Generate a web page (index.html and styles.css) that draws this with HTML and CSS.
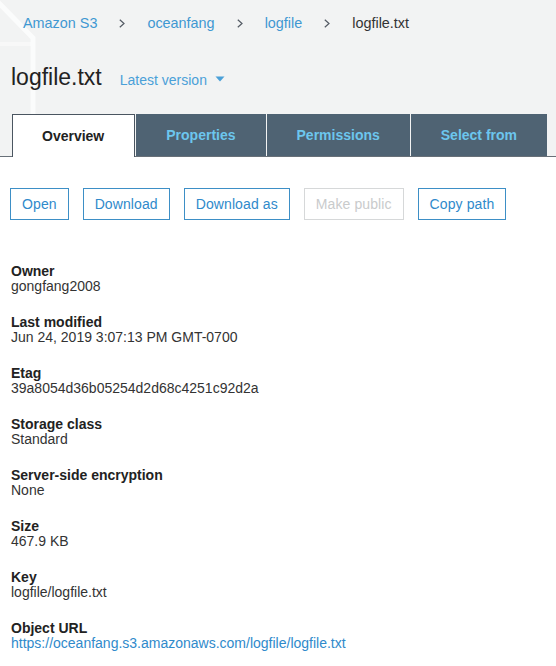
FILE: index.html
```
<!DOCTYPE html>
<html lang="en">
<head>
<meta charset="utf-8">
<title>logfile.txt</title>
<link rel="stylesheet" href="styles.css">
</head>
<body>
<header class="top">
  <svg class="deco" width="60" height="157" viewBox="0 0 60 157" aria-hidden="true">
    <path d="M-4 0 L33 38 L33 160" fill="none" stroke="#ffffff" stroke-width="5" stroke-opacity="0.7"/>
    <path d="M-4 44 L31 44" fill="none" stroke="#ffffff" stroke-width="4" stroke-opacity="0.45"/>
  </svg>
  <nav class="crumbs">
    <a class="crumb-link" href="#">Amazon S3</a>
    <svg class="chev" width="6" height="9" viewBox="0 0 6 9"><path d="M0.8 0.8 L5 4.5 L0.8 8.2" fill="none" stroke="#545b64" stroke-width="1.2"/></svg>
    <a class="crumb-link" href="#">oceanfang</a>
    <svg class="chev" width="6" height="9" viewBox="0 0 6 9"><path d="M0.8 0.8 L5 4.5 L0.8 8.2" fill="none" stroke="#545b64" stroke-width="1.2"/></svg>
    <a class="crumb-link" href="#">logfile</a>
    <svg class="chev" width="6" height="9" viewBox="0 0 6 9"><path d="M0.8 0.8 L5 4.5 L0.8 8.2" fill="none" stroke="#545b64" stroke-width="1.2"/></svg>
    <span class="crumb-current">logfile.txt</span>
  </nav>
  <div class="title-row">
    <h1 class="title">logfile.txt</h1>
    <span class="version">Latest version
      <svg class="caret" width="10" height="6" viewBox="0 0 10 6"><path d="M0.5 0.5 L9.5 0.5 L5 5.5 Z" fill="#4aa0d8"/></svg>
    </span>
  </div>
  <div class="tabs">
    <div class="tab tab-active">Overview</div>
    <div class="tab">Properties</div>
    <div class="tab">Permissions</div>
    <div class="tab">Select from</div>
  </div>
</header>
<main class="content">
  <div class="actions">
    <button class="btn">Open</button>
    <button class="btn">Download</button>
    <button class="btn">Download as</button>
    <button class="btn btn-disabled">Make public</button>
    <button class="btn">Copy path</button>
  </div>
  <dl class="props">
    <dt>Owner</dt><dd>gongfang2008</dd>
    <dt>Last modified</dt><dd>Jun 24, 2019 3:07:13 PM GMT-0700</dd>
    <dt>Etag</dt><dd>39a8054d36b05254d2d68c4251c92d2a</dd>
    <dt>Storage class</dt><dd>Standard</dd>
    <dt>Server-side encryption</dt><dd>None</dd>
    <dt>Size</dt><dd>467.9 KB</dd>
    <dt>Key</dt><dd>logfile/logfile.txt</dd>
    <dt>Object URL</dt><dd><a class="url" href="#">https://oceanfang.s3.amazonaws.com/logfile/logfile.txt</a></dd>
  </dl>
</main>
</body>
</html>
```
FILE: styles.css
```
* { box-sizing: border-box; }

html, body {
  margin: 0;
  padding: 0;
  background: #ffffff;
}

body {
  font-family: "Liberation Sans", Arial, Helvetica, sans-serif;
  font-size: 14px;
  color: #333333;
}

.top {
  position: relative;
  background: #f2f3f3;
  overflow: hidden;
}

.deco {
  position: absolute;
  left: 0;
  top: 0;
  pointer-events: none;
}

.crumbs {
  position: relative;
  display: flex;
  align-items: center;
  gap: 22px;
  padding: 13px 0 0 23px;
  font-size: 14.4px;
  line-height: 20px;
}

.crumb-link {
  color: #3f98d2;
  text-decoration: none;
}

.crumb-current {
  color: #333333;
}

.chev {
  display: block;
}

.title-row {
  position: relative;
  display: flex;
  align-items: baseline;
  margin-top: 30px;
  padding-left: 11px;
}

.title {
  margin: 0;
  font-size: 23px;
  line-height: 28px;
  font-weight: normal;
  color: #222222;
}

.version {
  display: inline-flex;
  align-items: center;
  gap: 8px;
  margin-left: 18px;
  color: #4aa0d8;
  font-size: 14px;
}

.caret {
  display: block;
  position: relative;
  top: -1px;
}

.tabs {
  position: relative;
  display: flex;
  align-items: flex-end;
  gap: 1px;
  margin-top: 23px;
  padding-left: 12px;
  border-bottom: 1px solid #687078;
}

.tab {
  height: 42px;
  padding: 0 30px;
  display: flex;
  align-items: center;
  background: #4f6373;
  color: #6cc6ee;
  font-weight: bold;
  font-size: 14px;
}

.tab-active {
  height: 43px;
  margin-bottom: -1px;
  padding: 0 30px 1px 29px;
  background: #ffffff;
  color: #222222;
  border: 1px solid #4a5560;
  border-bottom: none;
}

.content {
  padding: 31px 10px 0;
}

.actions {
  display: flex;
  gap: 14px;
}

.btn {
  height: 32px;
  padding: 0 11px;
  font-family: inherit;
  font-size: 14px;
  letter-spacing: 0.1px;
  line-height: 30px;
  color: #2f8acb;
  background: #ffffff;
  border: 1px solid #3d8fc6;
  border-radius: 0;
}

.btn-disabled {
  color: #c9cbcc;
  border-color: #d6d8d9;
}

.props {
  margin: 44px 0 0;
  padding-left: 1px;
}

.props dt {
  font-weight: bold;
  line-height: 15px;
  color: #222222;
}

.props dd {
  margin: 0 0 21px;
  line-height: 15px;
  color: #333333;
}

.url {
  color: #2f8acb;
  text-decoration: none;
}
```
